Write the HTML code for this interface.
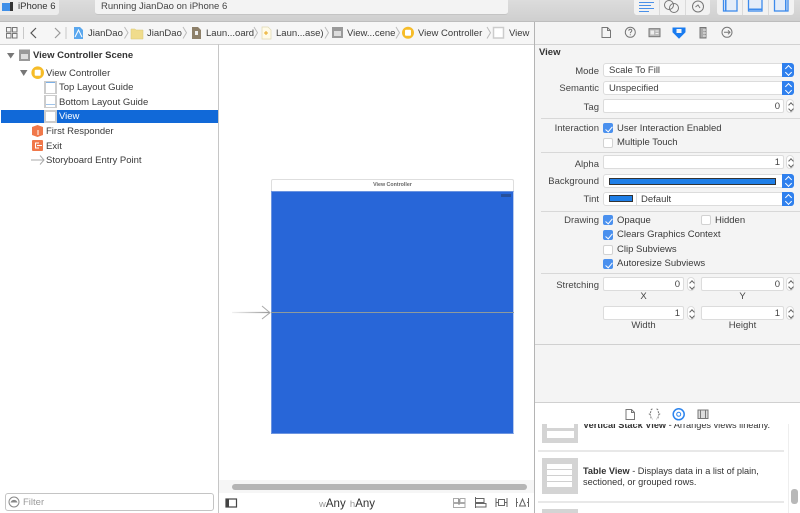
<!DOCTYPE html>
<html><head><meta charset="utf-8">
<style>
html,body{margin:0;padding:0;width:800px;height:513px;overflow:hidden;background:#fff;font-family:"Liberation Sans",sans-serif;color:#333}
*{box-sizing:border-box}
.a{position:absolute}
.t{position:absolute;font-size:9.5px;line-height:12px;white-space:nowrap;color:#3a3a3a}
.r{position:absolute;font-size:9.5px;line-height:12px;white-space:nowrap;color:#444;text-align:right;width:100px}
.c{position:absolute;font-size:9.5px;line-height:12px;white-space:nowrap;color:#444;text-align:center}
.f{position:absolute;background:#fff;border:1px solid #dcdcdc;border-radius:2px;height:14px;font-size:9.5px;line-height:12px;text-align:right;padding:1px 3px 0 0;color:#444}
.pop{position:absolute;left:603px;width:191px;height:14px;background:#fff;border:1px solid #dcdcdc;border-radius:3px;font-size:9.5px;line-height:12px;padding:1px 0 0 5px;color:#3c3c3c}
.pop i{position:absolute;right:-1px;top:-1px;width:12px;height:14px;background:#2f80ee;border-radius:0 3px 3px 0}
.pop i:before{content:"";position:absolute;left:4px;top:3px;width:4px;height:4px;border-left:1px solid #fff;border-top:1px solid #fff;transform:rotate(45deg)}
.pop i:after{content:"";position:absolute;left:4px;top:7px;width:4px;height:4px;border-right:1px solid #fff;border-bottom:1px solid #fff;transform:rotate(45deg)}
.st{position:absolute;width:8px;height:14px;background:#fff;border:1px solid #dcdcdc;border-radius:4px}
.st:before{content:"";position:absolute;left:1.5px;top:2.5px;width:3px;height:3px;border-left:1px solid #666;border-top:1px solid #666;transform:rotate(45deg)}
.st:after{content:"";position:absolute;left:1.5px;top:6.5px;width:3px;height:3px;border-right:1px solid #666;border-bottom:1px solid #666;transform:rotate(45deg)}
.ck{position:absolute;width:10px;height:10px;background:#fff;border:1px solid #d2d2d2;border-radius:2px}
.ck.on{background:#4a90ee;border-color:#4a90ee}
.ck.on:after{content:"";position:absolute;left:2.5px;top:0.5px;width:3px;height:6px;border-right:1.2px solid #fff;border-bottom:1.2px solid #fff;transform:rotate(40deg)}
.hr{position:absolute;left:541px;width:259px;height:1px;background:#d8d8d8}
</style></head>
<body>
<!-- top toolbar -->
<div class="a" style="left:0;top:0;width:800px;height:21px;background:linear-gradient(#dcdcdc,#cfcfcf)"></div>
<div class="a" style="left:0;top:21px;width:800px;height:1px;background:#bdbdbd"></div>
<div class="a" style="left:0;top:0;width:59px;height:15px;background:#ececec;border-radius:0 0 3px 0"></div>
<svg class="a" style="left:2px;top:1px" width="12" height="12"><rect x="0" y="2" width="9" height="8" fill="#3f8fe8"/><rect x="8" y="1" width="3" height="9" fill="#333"/></svg>
<div class="t" style="left:18px;top:1px;color:#333">iPhone 6</div>
<div class="a" style="left:95px;top:0;width:413px;height:15px;background:#f3f3f3;border-radius:0 0 3px 3px;border-bottom:1px solid #c4c4c4"></div>
<div class="t" style="left:101px;top:1px;color:#444">Running JianDao on iPhone 6</div>
<!-- toolbar right buttons -->
<div class="a" style="left:634px;top:0;width:76px;height:15px;background:#f2f2f2;border-radius:0 0 3px 3px"></div>
<div class="a" style="left:659px;top:0;width:1px;height:15px;background:#dadada"></div>
<div class="a" style="left:685px;top:0;width:1px;height:15px;background:#dadada"></div>
<svg class="a" style="left:634px;top:0" width="76" height="15" fill="none">
<path d="M5 2.500H20M5 5.500H17M5 8.500H20M5 11.500H15" stroke="#4a90e8" stroke-width="1"/>
<circle cx="35" cy="5" r="4.500" stroke="#777"/><circle cx="40" cy="8" r="4.500" stroke="#777"/>
<circle cx="64" cy="6.500" r="5.500" stroke="#777"/><path d="M61.500 7L64 5L66 8" stroke="#777"/>
</svg>
<div class="a" style="left:717px;top:0;width:77px;height:15px;background:#f2f2f2;border-radius:0 0 3px 3px"></div>
<div class="a" style="left:742px;top:0;width:1px;height:15px;background:#dadada"></div>
<div class="a" style="left:768px;top:0;width:1px;height:15px;background:#dadada"></div>
<svg class="a" style="left:717px;top:0" width="77" height="15" fill="none">
<rect x="6.500" y="-1" width="13.500" height="12" fill="#e4edf9" stroke="#3d8bec" stroke-width="1.300"/><rect x="8" y="0" width="1.500" height="10.500" fill="#3d8bec"/>
<rect x="31.500" y="-1" width="13.500" height="12" fill="#e4edf9" stroke="#3d8bec" stroke-width="1.300"/><rect x="32" y="8.500" width="12.500" height="1.500" fill="#3d8bec"/>
<rect x="57.500" y="-1" width="13.500" height="12" fill="#e4edf9" stroke="#3d8bec" stroke-width="1.300"/><rect x="68" y="0" width="1.500" height="10.500" fill="#3d8bec"/>
</svg>

<!-- jump bar -->
<div class="a" style="left:0;top:22px;width:534px;height:22px;background:#f6f6f6"></div>
<div class="a" style="left:0;top:44px;width:800px;height:1px;background:#d2d2d2"></div>
<svg class="a" style="left:0;top:22px" width="534" height="22" fill="none">
<g stroke="#777"><rect x="6.500" y="5.500" width="4.500" height="4.500"/><rect x="12.500" y="5.500" width="4.500" height="4.500"/><rect x="6.500" y="11.500" width="4.500" height="4.500"/><rect x="12.500" y="11.500" width="4.500" height="4.500"/></g>
<path d="M23.500 5V17" stroke="#c8c8c8"/>
<path d="M36 6L31 11L36 16" stroke="#555" stroke-width="1.200"/>
<path d="M55 6L60 11L55 16" stroke="#999" stroke-width="1.200"/>
<path d="M66 5V17" stroke="#c8c8c8"/>
<path d="M74 5H80L83 8V17H74Z" fill="#5aa7ee"/><path d="M75 15L78.500 8L82 15" stroke="#fff"/>
<path d="M124.500 5L128 10.700L124.500 16.500" stroke="#bbb"/>
<path d="M131 9V17H143V8H136L135 7H131Z" fill="#f0dc8c" stroke="#d8c878" stroke-width=".5"/>
<path d="M183 5L186.500 10.700L183 16.500" stroke="#bbb"/>
<path d="M192 5H198L201 8V17H192Z" fill="#8d8069"/><rect x="195" y="9" width="3" height="4" fill="#eee"/>
<path d="M254 5L257.500 10.700L254 16.500" stroke="#bbb"/>
<path d="M262 5H268L271 8V17H262Z" fill="#fffbe8" stroke="#e0d8b0" stroke-width=".7"/><path d="M266 9V13M264 11H268" stroke="#e8a820"/>
<path d="M325 5L328.500 10.700L325 16.500" stroke="#bbb"/>
<rect x="332" y="5" width="11" height="11" fill="#9a9a9a"/><rect x="334" y="9" width="7" height="5" fill="#ddd"/>
<path d="M396 5L399.500 10.700L396 16.500" stroke="#bbb"/>
<circle cx="408" cy="10.700" r="6" fill="#f6bc28"/><rect x="405" y="7.700" width="6" height="6" rx="1" fill="#fff"/>
<path d="M487 5L490.500 10.700L487 16.500" stroke="#bbb"/>
<rect x="493.500" y="5.500" width="10" height="10.500" fill="#fff" stroke="#ccc" stroke-width="1.500"/>
</svg>
<div class="t" style="left:88px;top:28px">JianDao</div>
<div class="t" style="left:147px;top:28px">JianDao</div>
<div class="t" style="left:206px;top:28px">Laun...oard</div>
<div class="t" style="left:276px;top:28px">Laun...ase)</div>
<div class="t" style="left:347px;top:28px">View...cene</div>
<div class="t" style="left:418px;top:28px">View Controller</div>
<div class="t" style="left:509px;top:28px">View</div>

<!-- left panel -->
<div class="a" style="left:218px;top:44px;width:1px;height:469px;background:#c6c6c6"></div>
<div class="a" style="left:219px;top:45px;width:315px;height:441px;background:#fff"></div>
<div class="a" style="left:1px;top:110px;width:217px;height:13px;background:#1169d8"></div>
<svg class="a" style="left:0;top:45px" width="218" height="125" fill="none">
<path d="M7 8H14.500L10.700 13.500Z" fill="#777"/>
<rect x="19" y="4.500" width="11" height="11.500" fill="#999"/><rect x="21" y="9" width="7" height="5" fill="#ddd"/>
<path d="M20 25H27.500L23.700 31Z" fill="#777"/>
<circle cx="37.700" cy="27.700" r="6.300" fill="#f6bc28"/><rect x="34.700" y="24.700" width="6" height="6" rx="1" fill="#fff"/>
<rect x="44" y="36" width="13" height="13" fill="#ccc"/><rect x="46" y="37" width="9" height="11" fill="#fff"/><rect x="46" y="37" width="9" height="1" fill="#7ab0e8"/>
<rect x="44" y="50" width="13" height="13" fill="#ccc"/><rect x="46" y="51" width="9" height="11" fill="#fff"/><rect x="46" y="59" width="9" height="1" fill="#a0c4ea"/>
<rect x="44" y="65" width="13" height="13" fill="#ccc"/><rect x="46" y="67" width="9" height="9" fill="#fff"/>
<path d="M32 82L37.500 80L43 82V90L37.500 92L32 90Z" fill="#f0784a"/><path d="M38 85V90" stroke="#fff"/>
<rect x="32" y="95" width="11" height="11" rx="1" fill="#f0784a"/><path d="M39 98H35.500V103H39M37 100.500H42" stroke="#fff"/>
<path d="M31 115H44M40 110.500L44 115L40 119.500" stroke="#aaa"/>
</svg>
<div class="t" style="left:33px;top:50px;font-weight:bold;color:#333">View Controller Scene</div>
<div class="t" style="left:46px;top:68px">View Controller</div>
<div class="t" style="left:59px;top:82px">Top Layout Guide</div>
<div class="t" style="left:59px;top:97px">Bottom Layout Guide</div>
<div class="t" style="left:59px;top:111px;color:#fff">View</div>
<div class="t" style="left:46px;top:126px">First Responder</div>
<div class="t" style="left:46px;top:141px">Exit</div>
<div class="t" style="left:46px;top:155px">Storyboard Entry Point</div>
<!-- filter -->
<div class="a" style="left:5px;top:493px;width:209px;height:18px;background:#fff;border:1px solid #c4c4c4;border-radius:3px"></div>
<svg class="a" style="left:8px;top:496px" width="13" height="13" fill="none"><circle cx="6" cy="6" r="5" stroke="#888"/><path d="M2.500 6.500C3.500 3 8.500 3 9.500 6.500Z" fill="#888"/></svg>
<div class="t" style="left:23px;top:497px;color:#9a9a9a">Filter</div>

<!-- canvas -->
<div class="a" style="left:271px;top:179px;width:243px;height:13px;background:#fff;border:1px solid #dedede;border-bottom:0;border-radius:2px 2px 0 0"></div>
<div class="a" style="left:271px;top:182px;width:243px;text-align:center;font-size:5.300px;line-height:6px;font-weight:bold;color:#666">View Controller</div>
<div class="a" style="left:271px;top:191px;width:243px;height:243px;background:#2866d8;border:1px solid #6c94e0;border-right-color:#b5c9ee"></div>
<div class="a" style="left:501px;top:194px;width:10px;height:3px;background:#27509c"></div>
<div class="a" style="left:271px;top:312px;width:243px;height:1px;background:#8e9a9c"></div>
<svg class="a" style="left:232px;top:303px" width="41" height="18" fill="none"><defs><linearGradient id="gr" gradientUnits="userSpaceOnUse" x1="0" y1="0" x2="38" y2="0"><stop offset="0" stop-color="#f2f2f2"/><stop offset="1" stop-color="#999"/></linearGradient></defs><path d="M0 9.500H38" stroke="url(#gr)" stroke-width="1.200"/><path d="M30 3L38 9.700L30 16" stroke="#aaa"/></svg>
<!-- scroll -->
<div class="a" style="left:219px;top:480px;width:315px;height:13px;background:#f6f6f6"></div>
<div class="a" style="left:232px;top:484px;width:295px;height:6px;background:#b5b5b5;border-radius:3px"></div>
<div class="a" style="left:219px;top:493px;width:315px;height:20px;background:#fff"></div>
<svg class="a" style="left:225px;top:498px" width="14" height="11" fill="none"><rect x="1" y="1" width="10.500" height="8" stroke="#444" stroke-width="1.200"/><rect x="1" y="1" width="3" height="8" fill="#444"/></svg>
<div class="a" style="left:319px;top:498px;font-size:11.500px;line-height:13px;color:#333;white-space:nowrap"><span style="color:#999;font-size:9.500px">w</span>Any <span style="color:#999;font-size:9.500px;margin-left:1px">h</span>Any</div>
<svg class="a" style="left:450px;top:495px" width="84" height="14" fill="none" stroke="#666">
<rect x="3.500" y="3.500" width="5" height="4" stroke="#aaa"/><rect x="10" y="3.500" width="5" height="4" stroke="#aaa"/><rect x="3.500" y="8.500" width="11.500" height="4" stroke="#aaa"/><path d="M9 4V10" stroke="#888"/>
<path d="M25.500 2V13M25.500 3.500H34V7.500H25.500M25.500 8.500H36V12H25.500"/>
<path d="M46 3V12M57 3V12M46 7.500H48M55 7.500H57"/><rect x="48.500" y="4.500" width="6" height="6"/>
<path d="M66.500 3V12M78.500 3V12M66.500 7.500H68M77 7.500H78.500"/><path d="M72.500 4L75.500 11H69.500Z"/>
</svg>

<!-- inspector -->
<div class="a" style="left:534px;top:22px;width:266px;height:491px;background:#f4f4f4"></div>
<div class="a" style="left:534px;top:22px;width:1px;height:491px;background:#b4b4b4"></div>
<div class="a" style="left:535px;top:44px;width:265px;height:1px;background:#d2d2d2"></div>
<svg class="a" style="left:535px;top:22px" width="265" height="22" fill="none" stroke="#777">
<path d="M67 5.500H72.500L75.500 8.500V15.500H67ZM72.500 5.500V8.500H75.500"/>
<circle cx="95.300" cy="10.300" r="5"/><path d="M93.800 8.800C93.800 6.800 96.800 6.800 96.800 8.800C96.800 9.800 95.300 9.800 95.300 11.300M95.300 12.300V13.300"/>
<rect x="114" y="6.700" width="11" height="8" fill="#bbb"/><rect x="115.500" y="8.500" width="3.500" height="4" fill="#eee" stroke="none"/><path d="M120.500 9H123.500M120.500 11.500H123.500" stroke="#eee"/>
<path d="M138 6H150V10L144 16L138 10Z" fill="#1a7cf0" stroke="#1a7cf0"/><rect x="141.500" y="7" width="5" height="4" fill="#f4f4f4" stroke="none"/>
<rect x="165" y="5.500" width="6" height="10.500" fill="#aaa" stroke="#777"/><path d="M168 8H171M168 11H171M168 14H171" stroke="#eee"/>
<circle cx="192" cy="10.300" r="5"/><path d="M189 10.300H195M193 8.300L195 10.300L193 12.300"/>
</svg>
<div class="t" style="left:539px;top:47px;font-weight:bold;color:#333">View</div>

<div class="r" style="left:499px;top:66px">Mode</div>
<div class="pop" style="top:63px">Scale To Fill<i></i></div>
<div class="r" style="left:499px;top:83px">Semantic</div>
<div class="pop" style="top:81px">Unspecified<i></i></div>
<div class="r" style="left:499px;top:102px">Tag</div>
<div class="f" style="left:603px;top:99px;width:181px">0</div>
<div class="st" style="left:786px;top:99px"></div>
<div class="hr" style="top:118px"></div>
<div class="r" style="left:499px;top:123px">Interaction</div>
<div class="ck on" style="left:603px;top:123px"></div>
<div class="t" style="left:617px;top:123px">User Interaction Enabled</div>
<div class="ck" style="left:603px;top:138px"></div>
<div class="t" style="left:617px;top:137px">Multiple Touch</div>
<div class="hr" style="top:152px"></div>
<div class="r" style="left:499px;top:159px">Alpha</div>
<div class="f" style="left:603px;top:155px;width:181px">1</div>
<div class="st" style="left:786px;top:155px"></div>

<div class="r" style="left:499px;top:176px">Background</div>
<div class="pop" style="top:174px"><i></i></div>
<div class="a" style="left:609px;top:178px;width:167px;height:7px;background:#1f7fe8;border:1px solid #333"></div>
<div class="r" style="left:499px;top:194px">Tint</div>
<div class="pop" style="top:192px;padding-left:37px">Default<i></i></div>
<div class="a" style="left:636px;top:192px;width:1px;height:14px;background:#dcdcdc"></div>
<div class="a" style="left:609px;top:195px;width:24px;height:7px;background:#1f7fe8;border:1px solid #333"></div>
<div class="hr" style="top:211px"></div>
<div class="r" style="left:499px;top:215px">Drawing</div>
<div class="ck on" style="left:603px;top:215px"></div>
<div class="t" style="left:617px;top:215px">Opaque</div>
<div class="ck" style="left:701px;top:215px"></div>
<div class="t" style="left:715px;top:215px">Hidden</div>
<div class="ck on" style="left:603px;top:230px"></div>
<div class="t" style="left:617px;top:229px">Clears Graphics Context</div>
<div class="ck" style="left:603px;top:245px"></div>
<div class="t" style="left:617px;top:244px">Clip Subviews</div>
<div class="ck on" style="left:603px;top:259px"></div>
<div class="t" style="left:617px;top:258px">Autoresize Subviews</div>
<div class="hr" style="top:273px"></div>
<div class="r" style="left:499px;top:280px">Stretching</div>
<div class="f" style="left:603px;top:277px;width:81px">0</div>
<div class="st" style="left:687px;top:277px"></div>
<div class="f" style="left:701px;top:277px;width:83px">0</div>
<div class="st" style="left:786px;top:277px"></div>
<div class="c" style="left:603px;top:291px;width:81px">X</div>
<div class="c" style="left:701px;top:291px;width:83px">Y</div>
<div class="f" style="left:603px;top:306px;width:81px">1</div>
<div class="st" style="left:687px;top:306px"></div>
<div class="f" style="left:701px;top:306px;width:83px">1</div>
<div class="st" style="left:786px;top:306px"></div>
<div class="c" style="left:603px;top:320px;width:81px">Width</div>
<div class="c" style="left:701px;top:320px;width:83px">Height</div>
<div class="a" style="left:535px;top:344px;width:265px;height:1px;background:#d0d0d0"></div>
<div class="a" style="left:535px;top:402px;width:265px;height:1px;background:#d0d0d0"></div>
<!-- library -->
<div class="a" style="left:535px;top:403px;width:265px;height:110px;background:#fff"></div>
<svg class="a" style="left:535px;top:403px" width="265" height="22" fill="none" stroke="#777">
<path d="M91 6.500H96.500L99.500 9.500V16.500H91ZM96.500 6.500V9.500H99.500"/>
<path d="M117.500 6C115 6 116.500 10 114.500 11C116.500 12 115 16 117.500 16M121.500 6C124 6 122.500 10 124.500 11C122.500 12 124 16 121.500 16" stroke-dasharray="2 1"/>
<circle cx="143.700" cy="11.300" r="5.500" stroke="#2c84ee" stroke-width="1.500"/><circle cx="143.700" cy="11.300" r="2" stroke="#2c84ee"/>
<rect x="163" y="7" width="10" height="8.500" fill="#ddd"/><path d="M165.500 7V15.500M170.500 7V15.500"/>
</svg>
<!-- list -->
<div class="a" style="left:535px;top:424px;width:265px;height:89px;overflow:hidden;background:#fff">
 <div class="a" style="left:7px;top:-6px;width:36px;height:25px;background:#d4d4d4"></div>
 <div class="a" style="left:12px;top:-3px;width:27px;height:7px;background:#fff"></div>
 <div class="a" style="left:12px;top:7px;width:27px;height:7px;background:#fff"></div>
 <div class="t" style="left:48px;top:-5px;font-size:9.200px;color:#333"><b>Vertical Stack View</b> - Arranges views linearly.</div>
 <div class="a" style="left:3px;top:26px;width:246px;height:2px;background:#e8e8e8"></div>
 <div class="a" style="left:7px;top:34px;width:36px;height:36px;background:#d4d4d4"></div>
 <div class="a" style="left:12px;top:40px;width:25px;height:23px;background:#fff"></div>
 <div class="a" style="left:12px;top:45px;width:25px;height:1px;background:#d0d0d0"></div>
 <div class="a" style="left:12px;top:51px;width:25px;height:1px;background:#d0d0d0"></div>
 <div class="a" style="left:12px;top:57px;width:25px;height:1px;background:#d0d0d0"></div>
 <div class="t" style="left:48px;top:41px;color:#333;font-size:9.200px"><b>Table View</b> - Displays data in a list of plain,</div>
 <div class="t" style="left:48px;top:52px;color:#333;font-size:9.200px">sectioned, or grouped rows.</div>
 <div class="a" style="left:3px;top:77px;width:246px;height:2px;background:#e8e8e8"></div>
 <div class="a" style="left:7px;top:85px;width:36px;height:10px;background:#d4d4d4"></div>
</div>
<div class="a" style="left:788px;top:424px;width:1px;height:89px;background:#eee"></div>
<div class="a" style="left:791px;top:489px;width:7px;height:15px;background:#b8b8b8;border-radius:3px"></div>
</body></html>
